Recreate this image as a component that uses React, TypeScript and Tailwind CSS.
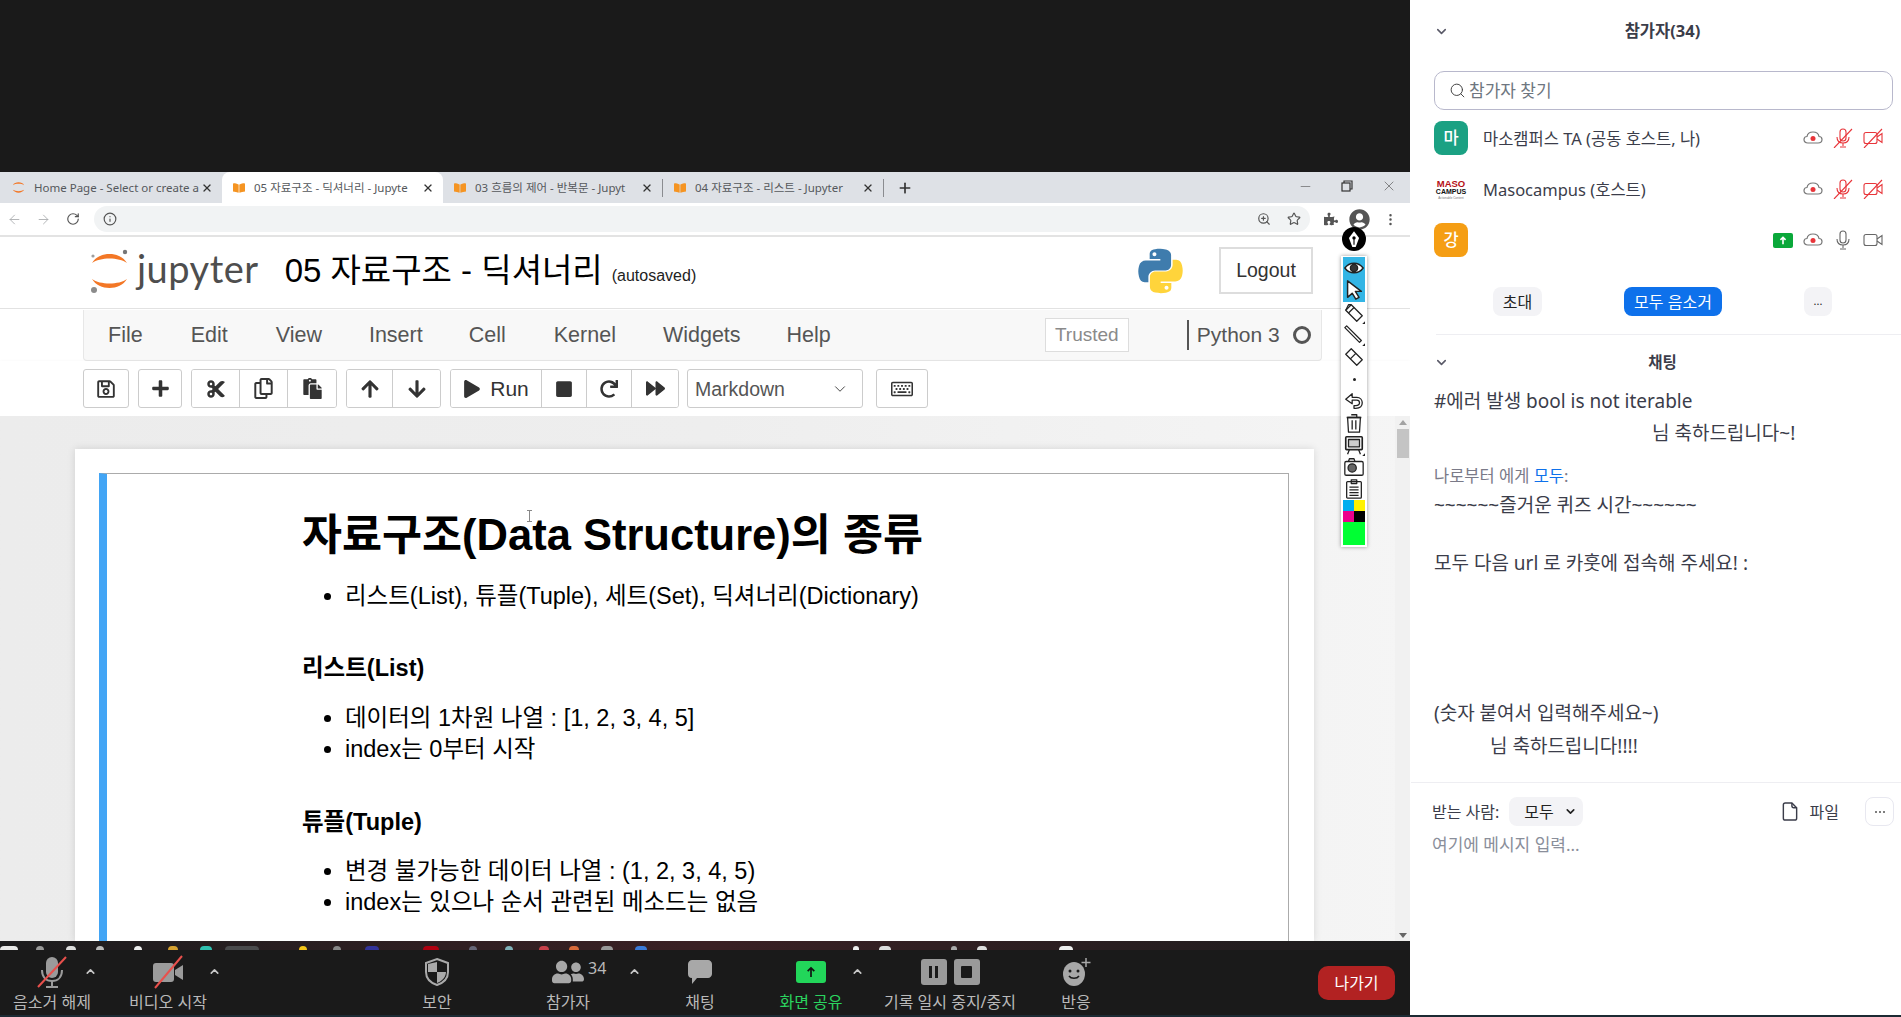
import { ChevronDown, ChevronUp, Search, X, Plus, ArrowLeft, ArrowRight, RotateCw, Info, ZoomIn, Star, Minus, EllipsisVertical } from "lucide-react";
import { FaRegSave, FaPlus, FaCut, FaRegCopy, FaPaste, FaArrowUp, FaArrowDown, FaPlay, FaStop, FaRedo, FaForward, FaRegKeyboard, FaPuzzlePiece, FaUserCircle, FaUserFriends, FaBookOpen } from "react-icons/fa";
import type { ReactNode } from "react";

const KR = "font-['Noto_Sans','Noto_Sans_CJK_KR',sans-serif]";
const AR = "font-['Liberation_Sans','Noto_Sans_CJK_KR',sans-serif]";

function JupyterLogo() {
  return (
    <svg viewBox="0 0 42 46" className="h-[46px] w-[42px]">
      <path d="M3 15 C10 3 31 3 38 15 C30 9 11 9 3 15Z" fill="#f37726" />
      <path d="M3 31 C10 43 31 43 38 31 C30 37 11 37 3 31Z" fill="#f37726" />
      <circle cx="36" cy="4" r="2.2" fill="#767677" />
      <circle cx="4" cy="8" r="1.6" fill="#9e9e9e" />
      <circle cx="5" cy="42" r="3" fill="#8b8b8b" />
    </svg>
  );
}

const pyPath =
  "M54.9.9c-4.6 0-8.9.4-12.8 1.1C30.8 4 28.8 8.2 28.8 15.9v10.2h26.3v3.4H19c-7.7 0-14.4 4.6-16.5 13.4-2.4 10-2.5 16.3 0 26.8 1.9 7.8 6.3 13.4 14 13.4h9.1V70.7c0-8.7 7.5-16.4 16.5-16.4h26.3c7.3 0 13.2-6 13.2-13.4V15.9c0-7.1-6-12.5-13.2-13.7C63.7 1.5 59 .9 54.9.9zM40.6 9.1c2.7 0 4.9 2.3 4.9 5 0 2.8-2.2 5-4.9 5-2.7 0-4.9-2.2-4.9-5 0-2.8 2.2-5 4.9-5z";

function PythonLogo() {
  return (
    <svg viewBox="0 0 111 111" className="h-[46px] w-[45px]">
      <path d={pyPath} fill="#3f7cad" />
      <path d={pyPath} fill="#ffd43b" transform="rotate(180 55.5 55.5)" />
    </svg>
  );
}

function Tab({ title, active, width, home }: { title: string; active?: boolean; width: string; home?: boolean }) {
  return (
    <div className={`${width} flex h-[31px] shrink-0 items-center pl-[11px] pr-[9px] ${active ? "rounded-t-lg bg-white" : ""}`}>
      {home ? (
        <svg viewBox="0 0 16 16" className="mr-[8px] h-[15px] w-[15px] shrink-0">
          <path d="M2 5.5C4 1.5 12 1.5 14 5.5C11 3.5 5 3.5 2 5.5Z" fill="#f37726" />
          <path d="M2 10.5C4 14.5 12 14.5 14 10.5C11 12.5 5 12.5 2 10.5Z" fill="#f37726" />
        </svg>
      ) : (
        <FaBookOpen className="mr-[9px] shrink-0 text-[12px] text-[#f59422]" />
      )}
      <span className={`${KR} min-w-0 flex-1 whitespace-nowrap text-[11.5px] text-[#55585c]`}>{title}</span>
      <X size={12} strokeWidth={2.5} className="ml-[2px] shrink-0 text-[#333]" />
    </div>
  );
}

function TabBar() {
  return (
    <div className="flex h-[31px] items-center bg-[#dee1e6]">
      <Tab home title="Home Page - Select or create a" width="w-[222px]" />
      <Tab active title="05 자료구조 - 딕셔너리 - Jupyte" width="w-[221px]" />
      <Tab title="03 흐름의 제어 - 반복문 - Jupyt" width="w-[219px]" />
      <div className="h-[18px] w-px bg-[#8a8c90]" />
      <Tab title="04 자료구조 - 리스트 - Jupyter" width="w-[220px]" />
      <div className="h-[18px] w-px bg-[#8a8c90]" />
      <Plus size={16} strokeWidth={2.5} className="ml-[13px] text-[#333]" />
      <div className="ml-auto flex items-center gap-[28px] pb-[3px] pr-[13px] text-[#555]">
        <Minus size={15} strokeWidth={1} />
        <svg viewBox="0 0 12 12" className="h-[12px] w-[12px]" fill="none" stroke="#333" strokeWidth="1.2">
          <path d="M3 3V1h8v8H9" />
          <rect x="1" y="3" width="8" height="8" />
        </svg>
        <X size={16} strokeWidth={1} />
      </div>
    </div>
  );
}

function AddressBar() {
  return (
    <div className="flex h-[34px] items-center border-b-2 border-[#e3e3e3] bg-white">
      <div className="flex w-[94px] shrink-0 items-center pl-[7px] text-[#a9abae]">
        <ArrowLeft size={15} strokeWidth={1.4} />
        <ArrowRight size={15} strokeWidth={1.4} className="ml-[14px]" />
        <RotateCw size={14} strokeWidth={2} className="ml-[15px] text-[#555]" />
      </div>
      <div className="flex h-[26px] w-[1216px] shrink-0 items-center rounded-full bg-[#f1f3f4] pl-[9px] pr-[9px] text-[#555]">
        <Info size={14} strokeWidth={2} />
        <ZoomIn size={14} className="ml-auto" />
        <Star size={14} className="ml-[16px]" />
      </div>
      <FaPuzzlePiece className="ml-[14px] text-[14px] text-[#555]" />
      <FaUserCircle className="ml-[11px] text-[21px] text-[#555]" />
      <EllipsisVertical size={15} className="ml-[13px] text-[#555]" />
    </div>
  );
}

function NotebookHeader() {
  return (
    <div className="flex h-[72px] items-center border-b border-[#e2e2e2] bg-white pb-[4px] pl-[89px]">
      <JupyterLogo />
      <span className="ml-[6px] pb-[6px] font-['Lato',sans-serif] text-[38px] leading-none tracking-[0.5px] text-[#4e4e4e]">jupyter</span>
      <span className={`${AR} ml-[26px] text-[33px] leading-none text-black`}>05 자료구조 - 딕셔너리</span>
      <span className={`${AR} ml-[9px] mt-[10px] text-[16px] text-[#222]`}>(autosaved)</span>
      <div className="ml-auto flex items-center pr-[97px]">
        <PythonLogo />
        <div className={`${AR} ml-[36px] flex h-[47px] w-[94px] items-center justify-center border-2 border-[#ddd] text-[19.5px] text-[#333]`}>Logout</div>
      </div>
    </div>
  );
}

function MenuBar() {
  const items: [string, string][] = [
    ["File", "ml-[24px]"],
    ["Edit", "ml-[48px]"],
    ["View", "ml-[48px]"],
    ["Insert", "ml-[47px]"],
    ["Cell", "ml-[46px]"],
    ["Kernel", "ml-[48px]"],
    ["Widgets", "ml-[47px]"],
    ["Help", "ml-[46px]"],
  ];
  return (
    <div className="ml-[83px] mr-[88px] mt-px flex h-[51px] items-center rounded-b-sm border border-t-0 border-[#e7e7e7] bg-[#f8f8f8]">
      {items.map(([t, m]) => (
        <span key={t} className={`${AR} ${m} text-[21.5px] text-[#555]`}>{t}</span>
      ))}
      <div className={`${AR} ml-[214px] flex h-[34px] w-[84px] items-center justify-center border border-[#ddd] bg-white text-[19px] text-[#8a8a8a]`}>Trusted</div>
      <div className="ml-[58px] h-[30px] w-[2px] bg-[#555]" />
      <span className={`${AR} ml-[8px] text-[21px] text-[#555]`}>Python 3</span>
      <div className="ml-[13px] h-[18px] w-[18px] rounded-full border-[3px] border-[#555]" />
    </div>
  );
}

function Btn({ w, children, group }: { w: string; children: ReactNode; group?: boolean }) {
  return (
    <div className={`${w} flex items-center justify-center bg-white text-[#333] ${group ? "h-[37px] border-r border-[#ccc] last:border-r-0" : "h-[39px] rounded-[3px] border border-[#ccc]"}`}>
      {children}
    </div>
  );
}

function BtnGroup({ children, ml }: { children: ReactNode; ml: string }) {
  return <div className={`${ml} flex overflow-hidden rounded-[3px] border border-[#ccc]`}>{children}</div>;
}

function Toolbar() {
  return (
    <div className="flex h-[55px] items-start bg-white pl-[83px] pt-[8px] shadow-[0_2px_4px_rgba(0,0,0,0.12)]">
      <Btn w="w-[46px]"><FaRegSave className="text-[20px]" /></Btn>
      <div className="ml-[9px]"><Btn w="w-[44px]"><FaPlus className="text-[19px]" /></Btn></div>
      <BtnGroup ml="ml-[9px]">
        <Btn group w="w-[48px]"><FaCut className="text-[20px]" /></Btn>
        <Btn group w="w-[48px]"><FaRegCopy className="text-[21px]" /></Btn>
        <Btn group w="w-[48px]"><FaPaste className="text-[21px]" /></Btn>
      </BtnGroup>
      <BtnGroup ml="ml-[9px]">
        <Btn group w="w-[46px]"><FaArrowUp className="text-[20px]" /></Btn>
        <Btn group w="w-[47px]"><FaArrowDown className="text-[20px]" /></Btn>
      </BtnGroup>
      <BtnGroup ml="ml-[9px]">
        <Btn group w="w-[91px]">
          <FaPlay className="text-[18px]" />
          <span className={`${AR} ml-[9px] text-[21px] text-[#333]`}>Run</span>
        </Btn>
        <Btn group w="w-[45px]"><FaStop className="text-[18px]" /></Btn>
        <Btn group w="w-[45px]"><FaRedo className="text-[18px]" /></Btn>
        <Btn group w="w-[46px]"><FaForward className="text-[19px]" /></Btn>
      </BtnGroup>
      <div className="ml-[8px] flex h-[39px] w-[176px] items-center rounded-[3px] border border-[#ccc] bg-white pl-[7px] pr-[13px]">
        <span className={`${AR} mt-[3px] text-[19.5px] text-[#555]`}>Markdown</span>
        <ChevronDown size={18} strokeWidth={1.3} className="ml-auto text-[#444]" />
      </div>
      <div className="ml-[13px]"><Btn w="w-[52px]"><FaRegKeyboard className="text-[22px]" /></Btn></div>
    </div>
  );
}

function Scrollbar() {
  return (
    <div className="flex w-[15px] shrink-0 flex-col items-center bg-[#f1f1f1] pt-[4px]">
      <div className="h-0 w-0 border-x-[4px] border-b-[5px] border-x-transparent border-b-[#a3a3a3]" />
      <div className="mt-[4px] h-[29px] w-[12px] bg-[#c4c4c4]" />
      <div className="mb-[3px] mt-auto h-0 w-0 border-x-[4px] border-t-[5px] border-x-transparent border-t-[#666]" />
    </div>
  );
}

function Notebook() {
  const li = `${AR} text-[23.5px] leading-[31px] text-black`;
  return (
    <div className="flex h-[525px] overflow-hidden bg-gradient-to-r from-[#ececec] via-[#eeeeee] to-[#f5f5f5]">
      <div className="ml-[75px] mt-[33px] w-[1239px] bg-white pl-[24px] pr-[25px] pt-[24px] shadow-[0_0_8px_rgba(0,0,0,0.12)]">
        <div className="relative h-[600px] border border-l-[8px] border-[#ababab] border-l-[#42a5f5] pl-[195px] pt-[33px]">
          <h1 className={`${AR} text-[43.5px] font-bold leading-[56px] text-black`}>자료구조(Data Structure)의 종류</h1>
          <div className="absolute left-[420px] top-[36px] h-[12px] w-[5px] border-x-0 border-y border-[#888]">
            <div className="mx-auto h-full w-px bg-[#888]" />
          </div>
          <ul className={`ml-[43px] mt-[18px] list-disc ${li}`}>
            <li>리스트(List), 튜플(Tuple), 세트(Set), 딕셔너리(Dictionary)</li>
          </ul>
          <h2 className={`${AR} mt-[41px] text-[23.5px] font-bold leading-[31px] text-black`}>리스트(List)</h2>
          <ul className={`ml-[43px] mt-[19px] list-disc ${li}`}>
            <li>데이터의 1차원 나열 : [1, 2, 3, 4, 5]</li>
            <li>index는 0부터 시작</li>
          </ul>
          <h2 className={`${AR} mt-[42px] text-[23.5px] font-bold leading-[31px] text-black`}>튜플(Tuple)</h2>
          <ul className={`ml-[43px] mt-[18px] list-disc ${li}`}>
            <li>변경 불가능한 데이터 나열 : (1, 2, 3, 4, 5)</li>
            <li>index는 있으나 순서 관련된 메소드는 없음</li>
          </ul>
        </div>
      </div>
      <div className="ml-auto flex"><Scrollbar /></div>
    </div>
  );
}

function InkIcon({ children }: { children: ReactNode }) {
  return (
    <svg viewBox="0 0 24 24" className="h-[22px] w-[22px]" fill="none" stroke="#222" strokeWidth="1.4" strokeLinejoin="round">
      {children}
    </svg>
  );
}

function InkToolbar() {
  return (
    <div className="absolute left-[1341px] top-[227px] flex w-[26px] flex-col items-center">
      <div className="flex h-[24px] w-[24px] items-center justify-center rounded-full bg-black">
        <svg viewBox="0 0 16 16" className="h-[18px] w-[18px]" fill="white">
          <path d="M8 1L12.500 7L9.500 15H6.500L3.500 7Z" />
          <circle cx="8" cy="7" r="1.500" fill="black" />
          <path d="M8 8v5" stroke="black" strokeWidth="1" />
        </svg>
      </div>
      <div className="mt-[5px] flex h-[291px] w-[26px] flex-col items-center bg-white shadow-[0_0_4px_rgba(0,0,0,0.4)]">
        <div className="mt-px flex h-[45px] w-[22px] flex-col items-center bg-[#33b5e5]">
          <InkIcon>
            <path d="M2 12C7 5 17 5 22 12C17 19 7 19 2 12Z" fill="white" strokeWidth="1.6" />
            <circle cx="12" cy="12" r="4" fill="#333" />
          </InkIcon>
          <InkIcon>
            <path d="M5 2V20L10 15.5L14 22L17.5 20L13.5 13.5H20Z" fill="white" strokeWidth="1.6" />
          </InkIcon>
        </div>
        <InkIcon>
          <path d="M3 9L9 3L21 15L15 21Z" fill="white" />
          <path d="M3 9L6 3H9" />
          <path d="M6 12L12 6" />
          <path d="M24 21V24H21Z" fill="#222" stroke="none" />
        </InkIcon>
        <InkIcon>
          <path d="M2 4L4 2L20 18L18 20Z" fill="white" />
          <path d="M24 21V24H21Z" fill="#222" stroke="none" />
        </InkIcon>
        <InkIcon>
          <path d="M3 9L9 3L21 15L15 21Z" fill="white" />
          <path d="M8 14L14 8" />
        </InkIcon>
        <div className="flex h-[22px] items-center"><div className="h-[3px] w-[3px] rounded-full bg-[#222]" /></div>
        <InkIcon>
          <path d="M3 10L10 4V8H15C19 8 21 11 21 14C21 18 18 20 14 20H12V17H14C17 17 18 15.500 18 14C18 12.500 17 11 15 11H10V15Z" fill="white" />
        </InkIcon>
        <InkIcon>
          <path d="M5 6H19L18 22H6Z" fill="white" />
          <path d="M4 6H20M9 3H15V6M10 9V19M14 9V19" />
        </InkIcon>
        <InkIcon>
          <rect x="3" y="3" width="18" height="14" rx="1" fill="white" strokeWidth="1.8" />
          <rect x="6" y="6" width="12" height="8" fill="#ccc" />
          <path d="M7 17L5 22M17 17L19 22" />
          <path d="M24 21V24H21Z" fill="#222" stroke="none" />
        </InkIcon>
        <InkIcon>
          <rect x="2" y="6" width="20" height="15" rx="1.500" fill="white" />
          <circle cx="10" cy="13" r="4.500" fill="#666" />
          <path d="M6 6L7 3H12L13 6" />
        </InkIcon>
        <InkIcon>
          <rect x="4" y="4" width="16" height="18" rx="1" fill="white" />
          <path d="M9 2H15V6H9ZM7 10H17M7 13H17M7 16H17M7 19H17" />
        </InkIcon>
        <div className="grid w-[22px] grid-cols-2">
          <div className="h-[11px] bg-[#00aeef]" />
          <div className="h-[11px] bg-[#fff200]" />
          <div className="h-[11px] bg-[#ec008c]" />
          <div className="h-[11px] bg-black" />
        </div>
        <div className="h-[23px] w-[22px] bg-[#00ff33]" />
      </div>
    </div>
  );
}

function TaskbarStrip() {
  const bits: [string, string][] = [
    ["w-[18px] ml-0", "bg-[#e8e8e8]"], ["w-[8px] ml-[18px]", "bg-[#999]"], ["w-[10px] ml-[22px]", "bg-[#ddd]"],
    ["w-[8px] ml-[20px]", "bg-[#bbb]"], ["w-[8px] ml-[30px]", "bg-[#eee]"], ["w-[10px] ml-[26px]", "bg-[#d5a02f]"],
    ["w-[12px] ml-[22px]", "bg-[#2fc0b0]"], ["w-[34px] ml-[13px]", "bg-[#4a4a4c]"], ["w-[8px] ml-[40px]", "bg-[#f5c518]"],
    ["w-[8px] ml-[26px]", "bg-[#888]"], ["w-[14px] ml-[24px]", "bg-[#33339a]"], ["w-[16px] ml-[44px]", "bg-[#b00010]"],
    ["w-[8px] ml-[30px]", "bg-[#667]"], ["w-[8px] ml-[28px]", "bg-[#7fb0b8]"], ["w-[10px] ml-[26px]", "bg-[#c9404a]"],
    ["w-[10px] ml-[20px]", "bg-[#d86a3a]"], ["w-[12px] ml-[22px]", "bg-[#999]"], ["w-[12px] ml-[22px]", "bg-[#3a7ad8]"],
    ["w-[6px] ml-[206px]", "bg-[#eee]"], ["w-[12px] ml-[20px]", "bg-[#ddd]"], ["w-[6px] ml-[60px]", "bg-[#aaa]"],
    ["w-[10px] ml-[20px]", "bg-[#ddd]"], ["w-[14px] ml-[72px]", "bg-[#eee]"],
  ];
  return (
    <div className="flex h-[9px] items-end overflow-hidden bg-gradient-to-r from-[#1c1c1e] via-[#3a2024] to-[#1c1c1e]">
      {bits.map(([w, c], i) => (
        <div key={i} className={`${w} h-[4px] rounded-t-sm ${c}`} />
      ))}
    </div>
  );
}

function ZoomItem({ label, ml, w, icon, caret, green }: { label: string; ml: string; w: string; icon: ReactNode; caret?: string; green?: boolean }) {
  return (
    <div className={`${ml} ${w} relative flex shrink-0 flex-col items-center`}>
      <div className="flex h-[34px] items-center justify-center">{icon}</div>
      <span className={`${KR} mt-[3px] whitespace-nowrap text-[16px] leading-[20px] ${green ? "text-[#2ad45f]" : "text-[#b9b9b9]"}`}>{label}</span>
      {caret && <ChevronUp size={13} strokeWidth={3} className={`absolute top-[10px] ${caret} text-[#c8c8c8]`} />}
    </div>
  );
}

function ZoomBar() {
  return (
    <div className="flex h-[65px] items-start bg-[#1a1a1a] pt-[5px]">
      <ZoomItem label="음소거 해제" ml="ml-0" w="w-[104px]" caret="left-[84px]" icon={
        <svg viewBox="0 0 32 34" className="h-[34px] w-[32px]">
          <rect x="10" y="2" width="12" height="21" rx="6" fill="#9b9b9b" />
          <path d="M6 15c0 7 4 11 10 11s10-4 10-11" fill="none" stroke="#9b9b9b" strokeWidth="2" />
          <path d="M16 26v5M10 32h12" stroke="#9b9b9b" strokeWidth="2" />
          <path d="M2 32L30 2" stroke="#e8504c" strokeWidth="2" />
        </svg>
      } />
      <ZoomItem label="비디오 시작" ml="ml-[12px]" w="w-[104px]" caret="left-[92px]" icon={
        <svg viewBox="0 0 32 34" className="h-[34px] w-[32px]">
          <rect x="1" y="8" width="21" height="19" rx="3" fill="#9b9b9b" />
          <path d="M23 15l8-5v15l-8-5z" fill="#9b9b9b" />
          <path d="M3 33L30 1" stroke="#e8504c" strokeWidth="2" />
        </svg>
      } />
      <ZoomItem label="보안" ml="ml-[177px]" w="w-[80px]" icon={
        <svg viewBox="0 0 26 30" className="h-[30px] w-[26px]">
          <path d="M13 2L24 6V15C24 22 19 26 13 28C7 26 2 22 2 15V6Z" fill="none" stroke="#aaa" strokeWidth="2" />
          <path d="M13 5V15H4V7ZM13 15H22C22 20 18 24 13 26Z" fill="#aaa" />
        </svg>
      } />
      <ZoomItem label="참가자" ml="ml-[31px]" w="w-[120px]" caret="left-[120px]" icon={
        <div className="relative flex items-center">
          <FaUserFriends className="text-[32px] text-[#a8a8a8]" />
          <span className={`${KR} absolute left-[36px] top-[2px] text-[16px] leading-[20px] text-[#b9b9b9]`}>34</span>
        </div>
      } />
      <ZoomItem label="채팅" ml="ml-[32px]" w="w-[80px]" icon={
        <svg viewBox="0 0 28 30" className="h-[30px] w-[28px]">
          <path d="M6 3H22C24 3 26 5 26 7V17C26 19 24 21 22 21H11L6 27V21C3 21 2 19 2 17V7C2 5 4 3 6 3Z" fill="#a8a8a8" />
        </svg>
      } />
      <ZoomItem label="화면 공유" ml="ml-[21px]" w="w-[100px]" green caret="left-[90px]" icon={
        <div className="flex h-[22px] w-[30px] items-center justify-center rounded-[3px] bg-[#22d65a]">
          <svg viewBox="0 0 12 14" className="h-[12px] w-[10px]" fill="none" stroke="#111" strokeWidth="2">
            <path d="M6 13V2M2 6l4-4 4 4" />
          </svg>
        </div>
      } />
      <ZoomItem label="기록 일시 중지/중지" ml="ml-[19px]" w="w-[140px]" icon={
        <div className="flex gap-[7px]">
          <div className="flex h-[26px] w-[26px] items-center justify-center gap-[3px] rounded-[3px] bg-[#9a9a9a]">
            <div className="h-[12px] w-[3px] bg-[#1a1a1a]" />
            <div className="h-[12px] w-[3px] bg-[#1a1a1a]" />
          </div>
          <div className="flex h-[26px] w-[26px] items-center justify-center rounded-[3px] bg-[#9a9a9a]">
            <div className="h-[12px] w-[11px] rounded-[1px] bg-[#1a1a1a]" />
          </div>
        </div>
      } />
      <ZoomItem label="반응" ml="ml-[26px]" w="w-[60px]" icon={
        <svg viewBox="0 0 30 30" className="h-[30px] w-[30px]">
          <ellipse cx="13" cy="17" rx="11" ry="12" fill="#a8a8a8" />
          <circle cx="9" cy="14" r="1.500" fill="#1a1a1a" />
          <circle cx="17" cy="14" r="1.500" fill="#1a1a1a" />
          <path d="M8 19c2 3 8 3 10 0" fill="none" stroke="#1a1a1a" strokeWidth="1.500" />
          <path d="M25 1v9M20.500 5.500h9" stroke="#a8a8a8" strokeWidth="1.500" />
        </svg>
      } />
      <div className={`${KR} ml-[212px] mt-[11px] flex h-[34px] w-[77px] items-center justify-center rounded-[10px] bg-[#b22222] text-[16px] text-white`}>나가기</div>
    </div>
  );
}

function CloudRec() {
  return (
    <svg viewBox="0 0 20 20" className="h-[20px] w-[20px]" fill="none" stroke="#777" strokeWidth="1.2">
      <path d="M5 15C2.500 15 1 13.500 1 11.500C1 9.500 2.500 8.500 4 8.500C4.500 5.500 7 4 10 4C13 4 15.500 5.500 16 8.500C17.500 8.500 19 9.500 19 11.500C19 13.500 17.500 15 15 15Z" />
      <circle cx="10" cy="10.500" r="2.500" fill="#e8353a" stroke="none" />
    </svg>
  );
}

function MicIcon({ off }: { off?: boolean }) {
  const c = off ? "#e8353a" : "#666";
  return (
    <svg viewBox="0 0 20 20" className="h-[20px] w-[20px]" fill="none" stroke={c} strokeWidth="1.1">
      <rect x="7" y="1" width="6" height="12" rx="3" />
      <path d="M4 9c0 4 2.500 6 6 6s6-2 6-6M10 15v3M7 19h6" />
      {off && <path d="M1 20L19 1" />}
    </svg>
  );
}

function CamIcon({ off }: { off?: boolean }) {
  const c = off ? "#e8353a" : "#666";
  return (
    <svg viewBox="0 0 20 20" className="h-[20px] w-[20px]" fill="none" stroke={c} strokeWidth="1.1">
      <rect x="1" y="4.500" width="13" height="11" rx="2" />
      <path d="M14 9L19 5.500V14.500L14 11" />
      {off && <path d="M1 20L19 1" />}
    </svg>
  );
}

function Person({ avatar, name, children }: { avatar: ReactNode; name: string; children: ReactNode }) {
  return (
    <div className="flex h-[34px] items-center">
      {avatar}
      <span className="ml-[15px] pt-[3px] text-[16.5px] text-[#3b3d4a]">{name}</span>
      <div className="ml-auto flex items-center gap-[10px] pr-[18px]">{children}</div>
    </div>
  );
}

function Avatar({ t, c }: { t: string; c: string }) {
  return <div className={`${c} flex h-[34px] w-[34px] items-center justify-center rounded-[8px] text-[16.5px] font-medium text-white`}>{t}</div>;
}

function Sidebar() {
  return (
    <div className={`${KR} flex w-[491px] shrink-0 flex-col bg-white`}>
      <div className="flex h-[64px] items-center pl-[24px] pr-[25px] pb-px">
        <ChevronDown size={15} strokeWidth={2.5} className="text-[#5a5a68]" />
        <span className="flex-1 text-center text-[16.5px] font-bold text-[#3b3d4a]">참가자(34)</span>
      </div>
      <div className="ml-[24px] mr-[8px] mt-[7px] flex h-[39px] items-center rounded-[10px] border border-[#b8b8cc] pl-[14px]">
        <Search size={17} strokeWidth={1.4} className="text-[#444]" />
        <span className="ml-[3px] text-[17px] text-[#6e7680]">참가자 찾기</span>
      </div>
      <div className="mt-[11px] flex flex-col gap-[17px] pl-[24px]">
        <Person name="마소캠퍼스 TA (공동 호스트, 나)" avatar={<Avatar t="마" c="bg-[#1ba183]" />}>
          <CloudRec />
          <MicIcon off />
          <CamIcon off />
        </Person>
        <Person name="Masocampus (호스트)" avatar={
          <div className="flex h-[34px] w-[34px] flex-col items-center justify-center leading-none">
            <span className="font-['Liberation_Sans',sans-serif] text-[9.5px] font-bold leading-[9px] text-[#b51016]">MASO</span>
            <span className="font-['Liberation_Sans',sans-serif] text-[7px] font-bold leading-[8px] text-[#111]">CAMPUS</span>
            <span className="font-['Liberation_Sans',sans-serif] text-[3px] leading-[4px] text-[#777]">Actionable Content</span>
          </div>
        }>
          <CloudRec />
          <MicIcon off />
          <CamIcon off />
        </Person>
        <Person name="" avatar={<Avatar t="강" c="bg-[#f59e14]" />}>
          <div className="flex h-[15px] w-[20px] items-center justify-center rounded-[2px] bg-[#0aa83a]">
            <svg viewBox="0 0 12 14" className="h-[9px] w-[8px]" fill="none" stroke="white" strokeWidth="2.500">
              <path d="M6 13V2M2 6l4-4 4 4" />
            </svg>
          </div>
          <CloudRec />
          <MicIcon />
          <CamIcon />
        </Person>
      </div>
      <div className="ml-[83px] mt-[30px] flex items-center">
        <div className="flex h-[29px] w-[49px] items-center justify-center rounded-[8px] bg-[#f3f3f6] text-[16px] text-[#222]">초대</div>
        <div className="ml-[82px] flex h-[29px] w-[98px] items-center justify-center rounded-[8px] bg-[#0e71eb] text-[16px] text-white">모두 음소거</div>
        <div className="ml-[82px] flex h-[29px] w-[28px] items-center justify-center rounded-[8px] bg-[#f3f3f6] text-[11px] text-[#222]">...</div>
      </div>
      <div className="ml-[26px] mt-[18px] h-px bg-[#eeeef2]" />

      <div className="flex h-[54px] items-center pl-[24px] pr-[25px]">
        <ChevronDown size={15} strokeWidth={2.5} className="text-[#5a5a68]" />
        <span className="flex-1 pt-px text-center text-[15.5px] font-bold text-[#3b3d4a]">채팅</span>
      </div>
      <div className="flex h-[393px] flex-col whitespace-nowrap pl-[24px] text-[19px] text-[#3b3d4a]">
        <span className="leading-[24px]">#에러 발생 bool is not iterable</span>
        <span className="ml-[218px] mt-[8px] leading-[24px]">님 축하드립니다~!</span>
        <span className="mt-[21px] text-[16.5px] leading-[20px] text-[#7a7a88]">나로부터 에게 <span className="text-[#0e71eb]">모두</span>:</span>
        <span className="mt-[7px] leading-[24px]">~~~~~~즐거운 퀴즈 시간~~~~~~</span>
        <span className="mt-[34px] leading-[24px]">모두 다음 url 로 카훗에 접속해 주세요! :</span>
        <span className="mt-[126px] leading-[24px]">(숫자 붙여서 입력해주세요~)</span>
        <span className="ml-[56px] mt-[9px] leading-[24px]">님 축하드립니다!!!!</span>
      </div>
      <div className="ml-px h-px bg-[#eeeef2]" />
      <div className="mt-[14px] flex items-center pl-[22px] pr-[7px] text-[16px] text-[#3b3d4a]">
        <span>받는 사람:</span>
        <div className="ml-[10px] flex h-[29px] w-[74px] items-center rounded-[8px] bg-[#f3f3f6] pl-[15px] text-[16px] text-[#222]">
          모두
          <ChevronDown size={13} strokeWidth={3} className="ml-[10px]" />
        </div>
        <svg viewBox="0 0 16 20" className="ml-auto h-[19px] w-[16px]" fill="none" stroke="#3b3d4a" strokeWidth="1.500">
          <path d="M3 1H10L15 6V17C15 18 14 19 13 19H3C2 19 1 18 1 17V3C1 2 2 1 3 1Z" />
          <path d="M10 1V4C10 5 11 6 12 6H15" />
        </svg>
        <span className="ml-[12px]">파일</span>
        <div className="ml-[26px] flex h-[29px] w-[29px] items-center justify-center rounded-[8px] border border-[#e8e8f0] text-[#555]">
          <div className="flex gap-[2px]">
            <div className="h-[2px] w-[2px] rounded-full bg-[#555]" />
            <div className="h-[2px] w-[2px] rounded-full bg-[#555]" />
            <div className="h-[2px] w-[2px] rounded-full bg-[#555]" />
          </div>
        </div>
      </div>
      <span className="ml-[22px] mt-[8px] text-[17px] leading-[22px] text-[#8a8e9a]">여기에 메시지 입력...</span>
      <div className="mt-auto h-[2px] bg-[#1c2a33]" />
    </div>
  );
}

export default function App() {
  return (
    <div className="relative flex h-[1017px] w-[1901px] overflow-hidden bg-white">
      <div className="flex w-[1410px] shrink-0 flex-col">
        <div className="h-[172px] bg-[#1a1a1a]" />
        <TabBar />
        <AddressBar />
        <NotebookHeader />
        <MenuBar />
        <Toolbar />
        <Notebook />
        <TaskbarStrip />
        <ZoomBar />
        <div className="h-[2px] bg-[#1c2a33]" />
      </div>
      <Sidebar />
      <InkToolbar />
    </div>
  );
}
